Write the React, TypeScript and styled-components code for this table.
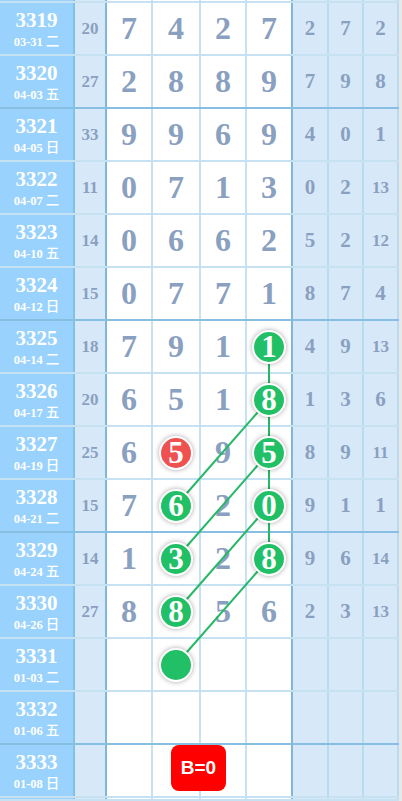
import React from 'react';
import styled, {createGlobalStyle} from 'styled-components';

type Ball = {col: number; n: string; tone: 'green' | 'red'};

type Draw = {
    period: string;
    date: string;
    week: string;
    sum?: string;
    main?: string[];
    side?: string[];
    balls?: Ball[];
    groupEnd?: boolean;
    badge?: string;
};

const draws: Draw[] = [
    {period: '3319', date: '03-31', week: '二', sum: '20', main: ['7', '4', '2', '7'], side: ['2', '7', '2']},
    {period: '3320', date: '04-03', week: '五', sum: '27', main: ['2', '8', '8', '9'], side: ['7', '9', '8'], groupEnd: true},
    {period: '3321', date: '04-05', week: '日', sum: '33', main: ['9', '9', '6', '9'], side: ['4', '0', '1']},
    {period: '3322', date: '04-07', week: '二', sum: '11', main: ['0', '7', '1', '3'], side: ['0', '2', '13']},
    {period: '3323', date: '04-10', week: '五', sum: '14', main: ['0', '6', '6', '2'], side: ['5', '2', '12']},
    {period: '3324', date: '04-12', week: '日', sum: '15', main: ['0', '7', '7', '1'], side: ['8', '7', '4'], groupEnd: true},
    {period: '3325', date: '04-14', week: '二', sum: '18', main: ['7', '9', '1', '1'], side: ['4', '9', '13'], balls: [{col: 3, n: '1', tone: 'green'}]},
    {period: '3326', date: '04-17', week: '五', sum: '20', main: ['6', '5', '1', '8'], side: ['1', '3', '6'], balls: [{col: 3, n: '8', tone: 'green'}]},
    {
        period: '3327',
        date: '04-19',
        week: '日',
        sum: '25',
        main: ['6', '5', '9', '5'],
        side: ['8', '9', '11'],
        balls: [
            {col: 1, n: '5', tone: 'red'},
            {col: 3, n: '5', tone: 'green'},
        ],
    },
    {
        period: '3328',
        date: '04-21',
        week: '二',
        sum: '15',
        main: ['7', '6', '2', '0'],
        side: ['9', '1', '1'],
        groupEnd: true,
        balls: [
            {col: 1, n: '6', tone: 'green'},
            {col: 3, n: '0', tone: 'green'},
        ],
    },
    {
        period: '3329',
        date: '04-24',
        week: '五',
        sum: '14',
        main: ['1', '3', '2', '8'],
        side: ['9', '6', '14'],
        balls: [
            {col: 1, n: '3', tone: 'green'},
            {col: 3, n: '8', tone: 'green'},
        ],
    },
    {period: '3330', date: '04-26', week: '日', sum: '27', main: ['8', '8', '5', '6'], side: ['2', '3', '13'], balls: [{col: 1, n: '8', tone: 'green'}]},
    {period: '3331', date: '01-03', week: '二', balls: [{col: 1, n: '', tone: 'green'}]},
    {period: '3332', date: '01-06', week: '五', groupEnd: true},
    {period: '3333', date: '01-08', week: '日', badge: 'B=0'},
];

// column widths incl. right border
const MAIN_W = [46, 48, 46, 46];
const SIDE_W = [36, 35, 35];
const ROW_PITCH = 53;
const TOP = 3;

const GlobalStyle = createGlobalStyle`
    html, body {
        margin: 0;
        padding: 0;
        height: 801px;
        overflow: hidden;
        background: #e8e8e8;
    }
    body {
        font-family: "Liberation Serif", "Noto Sans CJK SC", serif;
    }
`;

const Board = styled.div`
    position: relative;
    width: 399px;
    height: 801px;
    overflow: hidden;
`;

const Row = styled.div<{$thick?: boolean; $h?: number}>`
    display: flex;
    height: ${p => p.$h ?? 53}px;
    box-sizing: border-box;
    border-bottom: 2px solid ${p => (p.$thick ? '#86bfe1' : '#c6e1f1')};
`;

const PeriodCell = styled.div`
    flex: 0 0 75px;
    box-sizing: border-box;
    border-right: 2px solid #84bfe4;
    background: #99d2fc;
    color: #fff;
    font-weight: bold;
    display: flex;
    flex-direction: column;
    align-items: center;
    justify-content: center;
    gap: 3px;
    padding-top: 1px;
`;

const PeriodNo = styled.div`
    font-size: 21px;
    line-height: 20px;
`;

const PeriodDate = styled.div`
    font-size: 12.5px;
    line-height: 14px;
    display: flex;
    align-items: baseline;
    gap: 3px;
`;

const Week = styled.span`
    font-family: "Noto Sans CJK SC", sans-serif;
    font-size: 13.5px;
    font-weight: 500;
`;

const SumCell = styled.div`
    flex: 0 0 32px;
    box-sizing: border-box;
    border-right: 2px solid #7db7db;
    background: #d7e9f9;
    color: #8aa0c0;
    font-weight: bold;
    font-size: 17px;
    display: flex;
    align-items: center;
    justify-content: center;
`;

const MainCell = styled.div<{$w: number; $last?: boolean}>`
    position: relative;
    flex: 0 0 ${p => p.$w}px;
    box-sizing: border-box;
    border-right: 2px solid ${p => (p.$last ? '#7db7db' : '#c6e1f1')};
    background: #fff;
    color: #8aa0c0;
    font-weight: bold;
    font-size: 32px;
    display: flex;
    align-items: center;
    justify-content: center;
`;

const SideCell = styled.div<{$w: number; $small?: boolean}>`
    flex: 0 0 ${p => p.$w}px;
    box-sizing: border-box;
    border-right: 2px solid #b9dbef;
    background: #d7e9f9;
    color: #8aa0c0;
    font-weight: bold;
    font-size: ${p => (p.$small ? 17 : 21)}px;
    display: flex;
    align-items: center;
    justify-content: center;
`;

const BallMark = styled.div<{$tone: 'green' | 'red'}>`
    position: relative;
    z-index: 2;
    width: 34px;
    height: 34px;
    box-sizing: border-box;
    border-radius: 50%;
    border: 2px solid #fff;
    background: ${p => (p.$tone === 'green' ? '#22c066' : '#ef5050')};
    box-shadow: 0 0 5px rgba(0, 0, 0, 0.35);
    color: #fff;
    font-size: 31px;
    font-weight: bold;
    display: flex;
    align-items: center;
    justify-content: center;
    line-height: 1;
`;

const Badge = styled.div`
    position: absolute;
    z-index: 2;
    left: 18px;
    top: 0;
    width: 55px;
    height: 46px;
    border-radius: 8px;
    background: #ff0000;
    color: #fff;
    font-family: "Liberation Sans", Arial, sans-serif;
    font-weight: bold;
    font-size: 19px;
    display: flex;
    align-items: center;
    justify-content: center;
`;

const Overlay = styled.svg`
    position: absolute;
    left: 0;
    top: 0;
    z-index: 1;
    pointer-events: none;
`;

const colCenter = (col: number) => {
    let x = 107;
    for (let i = 0; i < col; i++) x += MAIN_W[i];
    return x + (MAIN_W[col] - 2) / 2;
};
const rowCenter = (period: string) => {
    const k = draws.findIndex(d => d.period === period);
    return TOP + k * ROW_PITCH + 25.5;
};

const links: [string, number, string, number][] = [
    ['3325', 3, '3329', 3],
    ['3326', 3, '3328', 1],
    ['3327', 3, '3329', 1],
    ['3328', 3, '3330', 1],
    ['3329', 3, '3331', 1],
];

const EmptyRow = ({h, thick}: {h?: number; thick?: boolean}) => (
    <Row $h={h} $thick={thick}>
        <PeriodCell />
        <SumCell />
        {MAIN_W.map((w, i) => (
            <MainCell key={i} $w={w} $last={i === 3} />
        ))}
        {SIDE_W.map((w, i) => (
            <SideCell key={i} $w={w} />
        ))}
    </Row>
);

export default function App() {
    return (
        <>
            <GlobalStyle />
            <Board>
                <EmptyRow h={3} />
                {draws.map(d => (
                    <Row key={d.period} $thick={d.groupEnd}>
                        <PeriodCell>
                            <PeriodNo>{d.period}</PeriodNo>
                            <PeriodDate>
                                {d.date}
                                <Week>{d.week}</Week>
                            </PeriodDate>
                        </PeriodCell>
                        <SumCell>{d.sum}</SumCell>
                        {MAIN_W.map((w, i) => {
                            const ball = d.balls?.find(b => b.col === i);
                            return (
                                <MainCell key={i} $w={w} $last={i === 3}>
                                    {ball ? <BallMark $tone={ball.tone}>{ball.n}</BallMark> : d.main?.[i]}
                                    {d.badge && i === 1 && <Badge>{d.badge}</Badge>}
                                </MainCell>
                            );
                        })}
                        {SIDE_W.map((w, i) => (
                            <SideCell key={i} $w={w} $small={(d.side?.[i] ?? '').length > 1}>
                                {d.side?.[i]}
                            </SideCell>
                        ))}
                    </Row>
                ))}
                <EmptyRow h={3} />
                <Overlay width={399} height={801}>
                    {links.map(([p1, c1, p2, c2], i) => (
                        <line
                            key={i}
                            x1={colCenter(c1)}
                            y1={rowCenter(p1)}
                            x2={colCenter(c2)}
                            y2={rowCenter(p2)}
                            stroke="#26b866"
                            strokeWidth={2}
                        />
                    ))}
                </Overlay>
            </Board>
        </>
    );
}
